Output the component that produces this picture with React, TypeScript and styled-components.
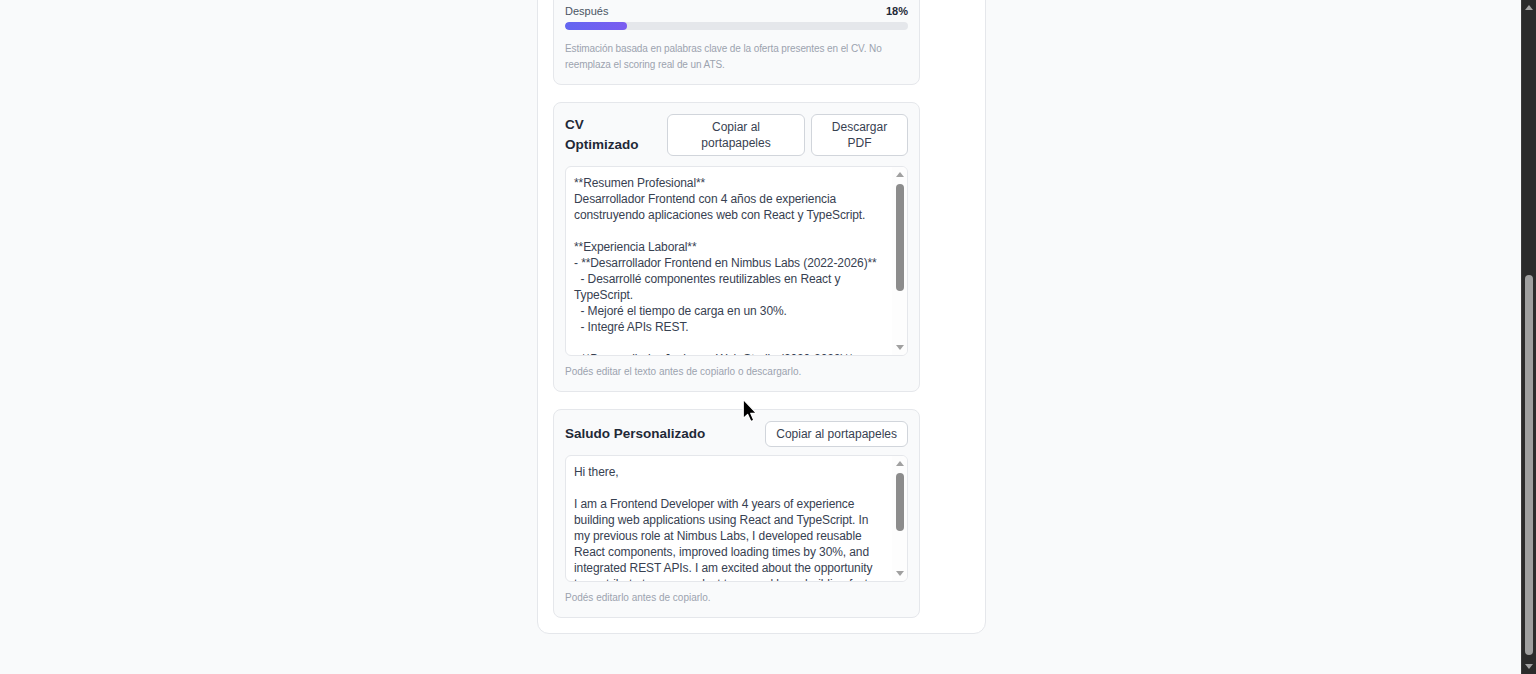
import React from 'react';
import styled, { createGlobalStyle } from 'styled-components';

const GlobalStyle = createGlobalStyle`
  html, body {
    margin: 0;
    padding: 0;
    background: #f9fafb;
    font-family: "Segoe UI", "Liberation Sans", Arial, sans-serif;
    color: #1f2937;
  }
  * { box-sizing: border-box; }
`;

const Viewport = styled.div`
  position: relative;
  display: flex;
  height: 674px;
  overflow: hidden;
`;

const Main = styled.main`
  flex: 1;
  display: flex;
  flex-direction: column;
  justify-content: flex-end;
  align-items: center;
  padding: 0 0 40px 2px;
  overflow: hidden;
`;

const Panel = styled.section`
  flex-shrink: 0;
  width: 449px;
  background: #ffffff;
  border: 1px solid #e5e7eb;
  border-radius: 12px;
  padding: 15px;
  display: flex;
  flex-direction: column;
  gap: 17px;
`;

const Card = styled.div`
  width: 367px;
  background: #f9fafb;
  border: 1px solid #e5e7eb;
  border-radius: 8px;
  padding: 11px;
  display: flex;
  flex-direction: column;
`;

const CardHeader = styled.div<{ $gap?: number }>`
  display: flex;
  align-items: center;
  justify-content: space-between;
  gap: 8px;
  margin-bottom: ${p => p.$gap ?? 10}px;
`;

const CardTitle = styled.h3`
  margin: 0;
  font-size: 13.5px;
  line-height: 20px;
  font-weight: 600;
  color: #1f2937;
`;

const ButtonGroup = styled.div`
  display: flex;
  gap: 6px;
  flex-shrink: 0;
`;

const Button = styled.button<{ $width?: number }>`
  width: ${p => (p.$width ? `${p.$width}px` : 'auto')};
  padding: 4px 10px;
  background: #ffffff;
  border: 1px solid #d1d5db;
  border-radius: 6px;
  font-family: inherit;
  font-size: 12px;
  line-height: 16px;
  color: #374151;
  text-align: center;
  cursor: pointer;
`;

const EditorBox = styled.div<{ $height: number }>`
  display: flex;
  height: ${p => p.$height}px;
  background: #ffffff;
  border: 1px solid #e5e7eb;
  border-radius: 6px;
  overflow: hidden;
`;

const TextArea = styled.textarea`
  flex: 1;
  min-width: 0;
  height: 100%;
  padding: 8px 0 8px 8px;
  background: transparent;
  border: none;
  font-family: inherit;
  font-size: 12px;
  line-height: 16px;
  letter-spacing: -0.1px;
  color: #374151;
  resize: none;
  outline: none;
  overflow-y: auto;
  scrollbar-width: none;
`;

const FakeScrollbar = styled.div`
  width: 15px;
  flex-shrink: 0;
  display: flex;
  flex-direction: column;
  align-items: center;
  background: #fdfdfd;
  margin-left: 8px;
`;

const BoxArrow = styled.div<{ $dir: 'up' | 'down' }>`
  height: 15px;
  width: 15px;
  display: flex;
  align-items: center;
  justify-content: center;
  &::before {
    content: '';
    border-left: 4.5px solid transparent;
    border-right: 4.5px solid transparent;
    ${p =>
      p.$dir === 'up'
        ? 'border-bottom: 5px solid #a0a0a0;'
        : 'border-top: 5px solid #a0a0a0;'}
  }
`;

const BoxTrack = styled.div`
  flex: 1;
  padding-top: 2px;
`;

const BoxThumb = styled.div<{ $size: number }>`
  width: 8px;
  height: ${p => p.$size}px;
  border-radius: 4px;
  background: #8c8c8c;
`;

const Hint = styled.p`
  margin: 8px 0 0;
  font-size: 10px;
  line-height: 16px;
  color: #9ca3af;
`;

const ScoreRow = styled.div`
  display: flex;
  flex-direction: column;
  gap: 3px;
  & + & {
    margin-top: 10px;
  }
`;

const ScoreLabels = styled.div`
  display: flex;
  justify-content: space-between;
  font-size: 11px;
  line-height: 16px;
  color: #4b5563;
`;

const ScoreValue = styled.span`
  font-weight: 600;
  color: #1f2937;
`;

const BarTrack = styled.div`
  height: 8px;
  border-radius: 4px;
  background: #e5e7eb;
  overflow: hidden;
`;

const BarFill = styled.div<{ $tone: string }>`
  height: 100%;
  border-radius: 4px;
  background: ${p => p.$tone};
`;

const Note = styled.p`
  margin: 11px 0 0;
  font-size: 10px;
  line-height: 16px;
  letter-spacing: -0.1px;
  color: #9ca3af;
`;

const ScrollRail = styled.div`
  width: 15px;
  flex-shrink: 0;
  display: flex;
  flex-direction: column;
  background: #2b2b2b;
  border-left: 1px solid #3a3a3a;
`;

const ScrollArrow = styled.div<{ $dir: 'up' | 'down' }>`
  height: 15px;
  display: flex;
  align-items: center;
  justify-content: center;
  &::before {
    content: '';
    border-left: 4px solid transparent;
    border-right: 4px solid transparent;
    ${p =>
      p.$dir === 'up'
        ? 'border-bottom: 5px solid #a3a3a3;'
        : 'border-top: 5px solid #a3a3a3;'}
  }
`;

const ScrollTrack = styled.div`
  flex: 1;
  display: flex;
  flex-direction: column;
  justify-content: flex-end;
  align-items: center;
  padding-bottom: 4px;
`;

const ScrollThumb = styled.div`
  width: 8px;
  height: 380px;
  border-radius: 4px;
  background: #9f9f9f;
`;

const Cursor = styled.svg`
  position: absolute;
  left: 742px;
  top: 398px;
  pointer-events: none;
`;

const cvText = `**Resumen Profesional**
Desarrollador Frontend con 4 años de experiencia construyendo aplicaciones web con React y TypeScript.

**Experiencia Laboral**
- **Desarrollador Frontend en Nimbus Labs (2022-2026)**
  - Desarrollé componentes reutilizables en React y TypeScript.
  - Mejoré el tiempo de carga en un 30%.
  - Integré APIs REST.

- **Desarrollador Junior en Web Studio (2020-2022)**
  - Mantuve sitios corporativos con JavaScript y CSS.
  - Colaboré con diseño para mejorar la accesibilidad.

**Habilidades**
React, TypeScript, JavaScript, HTML, CSS, Git, REST APIs

**Educación**
Tecnicatura en Desarrollo de Software`;

const greetingText = `Hi there,

I am a Frontend Developer with 4 years of experience building web applications using React and TypeScript. In my previous role at Nimbus Labs, I developed reusable React components, improved loading times by 30%, and integrated REST APIs. I am excited about the opportunity to contribute to your product team and keep building fast, accessible interfaces.

Best regards`;

const scores = [
  { label: 'Antes', value: 9, tone: '#9ca3af' },
  { label: 'Después', value: 18, tone: 'linear-gradient(90deg, #6366f1, #7b5cf0)' },
];

type EditorProps = { height: number; thumb: number; text: string };

const Editor: React.FC<EditorProps> = ({ height, thumb, text }) => (
  <EditorBox $height={height}>
    <TextArea defaultValue={text} spellCheck={false} />
    <FakeScrollbar>
      <BoxArrow $dir="up" />
      <BoxTrack>
        <BoxThumb $size={thumb} />
      </BoxTrack>
      <BoxArrow $dir="down" />
    </FakeScrollbar>
  </EditorBox>
);

const App: React.FC = () => {
  return (
    <>
      <GlobalStyle />
      <Viewport>
        <Main>
          <Panel>
            <Card>
              <CardHeader>
                <CardTitle>Compatibilidad ATS</CardTitle>
              </CardHeader>
              {scores.map(s => (
                <ScoreRow key={s.label}>
                  <ScoreLabels>
                    <span>{s.label}</span>
                    <ScoreValue>{s.value}%</ScoreValue>
                  </ScoreLabels>
                  <BarTrack>
                    <BarFill $tone={s.tone} style={{ width: `${s.value}%` }} />
                  </BarTrack>
                </ScoreRow>
              ))}
              <Note>
                Estimación basada en palabras clave de la oferta presentes en el CV. No
                reemplaza el scoring real de un ATS.
              </Note>
            </Card>

            <Card>
              <CardHeader>
                <CardTitle>CV Optimizado</CardTitle>
                <ButtonGroup>
                  <Button $width={138}>Copiar al portapapeles</Button>
                  <Button $width={97}>Descargar PDF</Button>
                </ButtonGroup>
              </CardHeader>
              <Editor height={190} thumb={107} text={cvText} />
              <Hint>Podés editar el texto antes de copiarlo o descargarlo.</Hint>
            </Card>

            <Card>
              <CardHeader $gap={8}>
                <CardTitle>Saludo Personalizado</CardTitle>
                <Button>Copiar al portapapeles</Button>
              </CardHeader>
              <Editor height={127} thumb={58} text={greetingText} />
              <Hint>Podés editarlo antes de copiarlo.</Hint>
            </Card>
          </Panel>
        </Main>
        <ScrollRail>
          <ScrollArrow $dir="up" />
          <ScrollTrack>
            <ScrollThumb />
          </ScrollTrack>
          <ScrollArrow $dir="down" />
        </ScrollRail>
        <Cursor width="16" height="25" viewBox="0 0 13 20">
          <path
            d="M1 1 L1 16.5 L4.6 13.2 L7.2 19 L9.6 18 L7.1 12.3 L11.8 12.3 Z"
            fill="#000"
            stroke="#fff"
            strokeWidth="1"
            strokeLinejoin="round"
          />
        </Cursor>
      </Viewport>
    </>
  );
};

export default App;
